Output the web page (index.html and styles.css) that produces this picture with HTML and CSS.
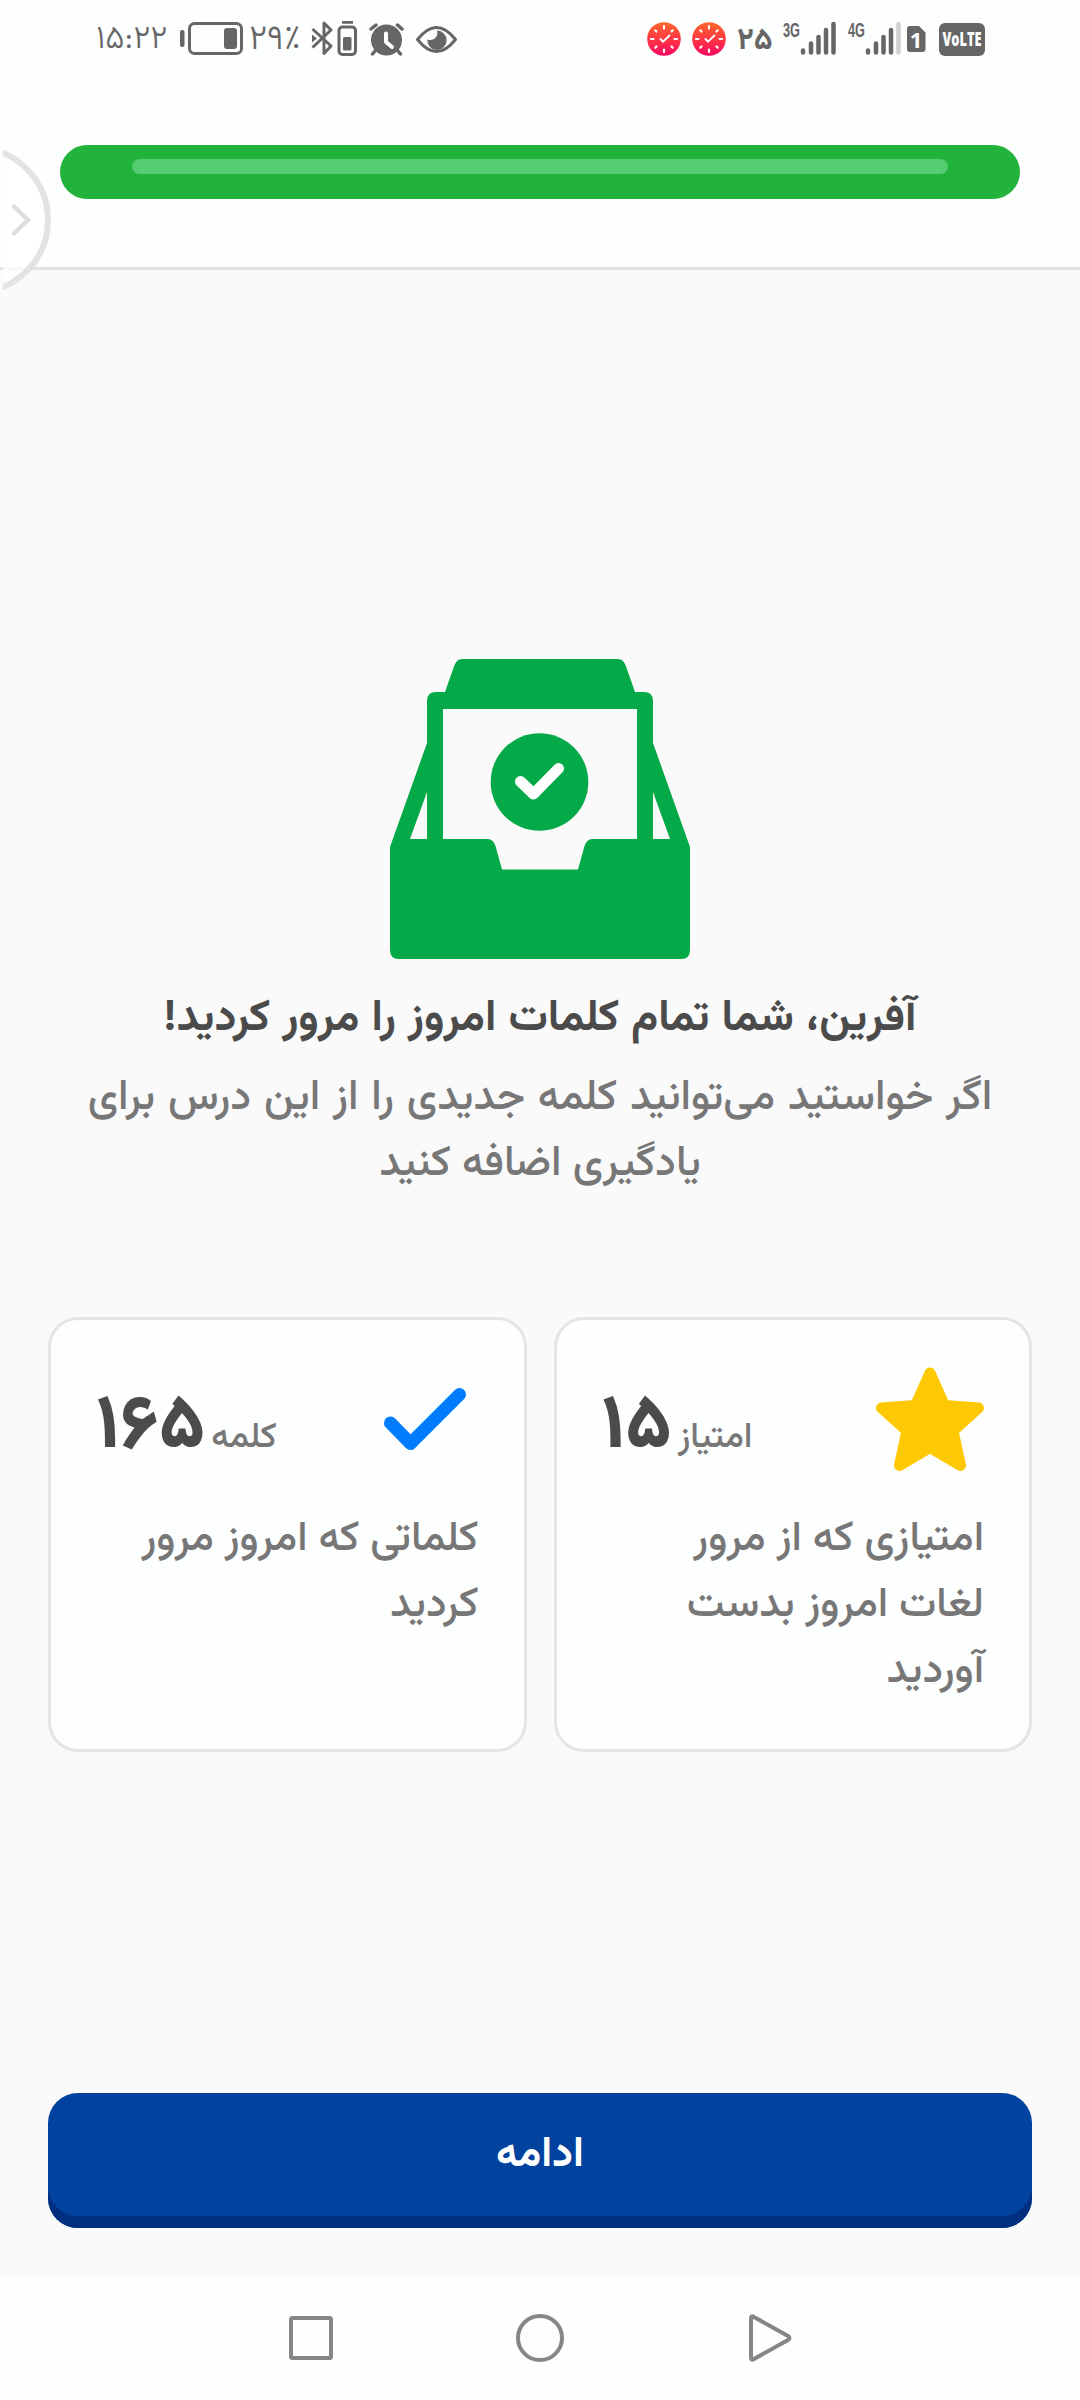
FILE: index.html
```html
<!DOCTYPE html>
<html lang="fa">
<head>
<meta charset="utf-8">
<title>مرور کلمات</title>
<link rel="stylesheet" href="styles.css">
</head>
<body>
<div class="status">
  <div class="status-left">
    <span class="clock">۱۵:۲۲</span>
    <svg class="battery" width="64" height="34" viewBox="179 23 64 34"><rect x="180" y="31" width="4.5" height="17" rx="2"/><rect x="189.500" y="24.500" width="52" height="30" rx="5" fill="none" stroke="#666" stroke-width="3"/><rect x="224" y="29" width="13" height="21" rx="3"/></svg>
    <span class="percent">۲۹٪</span>
    <svg class="bt" width="48" height="38" viewBox="311 21 48 38"><g fill="none" stroke="#666" stroke-width="3" stroke-linejoin="round"><path d="M312.500 30 331 47 324 54.500V24L331 31 312.500 48.500"/><rect x="339" y="28" width="16.500" height="27.500" rx="3.500"/></g><path d="M312 35.500 317 39.500 312 43.500ZM342 22h11v2.700h-11z"/><rect x="343" y="38" width="8.500" height="13.500" rx="1.500"/></svg>
    <svg class="alarm" width="36" height="36" viewBox="369 21 36 36"><circle cx="386.500" cy="40" r="15.500"/><path d="M386 33.500V42L392 47" fill="none" stroke="#fff" stroke-width="4" stroke-linecap="round" stroke-linejoin="round"/><path d="M371 29 376 25M402 29 397.500 25M375 51 372.500 54M398 51 400.500 54" fill="none" stroke="#666" stroke-width="3.500" stroke-linecap="round"/></svg>
    <svg class="eye" width="42" height="30" viewBox="415 24 42 30"><path d="M417.500 39.500Q436.500 15.500 455.500 39.500Q436.500 63.500 417.500 39.500Z" fill="none" stroke="#666" stroke-width="3" stroke-linejoin="round"/><path d="M437 30.500a9.700 9.700 0 1 1-9.700 9q4.700 1.500 8-1.500 3-3.500 1.700-7.500z"/></svg>
  </div>
  <div class="status-right">
    <svg class="dial" width="34" height="34" viewBox="-17 -17 34 34"><defs><linearGradient id="hot" x2="0" y2="1"><stop stop-color="#ff682b"/><stop offset=".5" stop-color="#ff3744"/><stop offset="1" stop-color="#f70762"/></linearGradient></defs><circle r="16.800" fill="url(#hot)"/><path d="M0-13v2.500M0 13v-2.500M-13 0h2.500M13 0h-2.500M-8.700-8.700l1.200 1.200M8.700-8.700l-1.200 1.200M-8.700 8.700l1.200-1.200M8.700 8.700l-1.200-1.200" stroke="#fff" stroke-width="2.200" stroke-linecap="round"/><path d="M-3.500 0-1 2.700 5.500-3.500" fill="none" stroke="#fff" stroke-width="1.900" stroke-linecap="round"/></svg>
    <svg class="dial" width="34" height="34" viewBox="-17 -17 34 34"><circle r="16.800" fill="url(#hot)"/><path d="M0-13v2.500M0 13v-2.500M-13 0h2.500M13 0h-2.500M-8.700-8.700l1.200 1.200M8.700-8.700l-1.200 1.200M-8.700 8.700l1.200-1.200M8.700 8.700l-1.200-1.200" stroke="#fff" stroke-width="2.200" stroke-linecap="round"/><path d="M-3.500 0-1 2.700 5.500-3.500" fill="none" stroke="#fff" stroke-width="1.900" stroke-linecap="round"/></svg>
    <span class="count">۲۵</span>
    <svg class="net-icon" width="54" height="36" viewBox="782 21 54 36"><text x="783" y="37" textLength="17" lengthAdjust="spacingAndGlyphs" class="net">3G</text><path class="bars" d="M803 50.500v2M811 43.500v9M818.500 37v15.500M826 30v22.500M833.500 24v28.500"/></svg>
    <svg class="net-icon sig" width="54" height="36" viewBox="847 21 54 36"><text x="848" y="37" textLength="17" lengthAdjust="spacingAndGlyphs" class="net">4G</text><path class="bars" d="M868 50.500v2M876 43.500v9M883.500 37v15.500M891 30v22.500"/><path class="bars off" d="M898.500 24v28.500"/></svg>
    <svg class="sim" width="20" height="28" viewBox="906 25 20 28"><path d="M910 26h9l6.500 6.500V49q0 3-3 3H910q-3 0-3-3V29q0-3 3-3z"/><text x="916" y="47.500" text-anchor="middle" class="sim-no">1</text></svg>
    <span class="volte"><svg class="net-icon" width="40" height="24" viewBox="0 0 40 24"><text x="0.500" y="19" textLength="39" lengthAdjust="spacingAndGlyphs" class="volte-text">VoLTE</text></svg></span>
  </div>
</div>
<header class="top"><div class="progress"><div class="shine"></div></div></header>
<svg class="handle" width="51" height="150" viewBox="3 144 51 150"><circle cx="-24" cy="220" r="72" fill="#fff" fill-opacity=".75" stroke="#dfe1e1" stroke-opacity=".9" stroke-width="6"/><path d="M14 206.500 28 220 14 233.500" fill="none" stroke="#e0dddf" stroke-width="4.500" stroke-linecap="round"/></svg>
<main class="content" dir="rtl">
  <svg class="box" width="300" height="300" viewBox="0 0 300 300"><path fill="#04aa47" fill-rule="evenodd" d="M72 0H228Q233 0 235.500 6L245 33H254Q263 33 263 42V84L300 188V291Q300 300 291 300H9Q0 300 0 291V188L37 84V42Q37 33 46 33H55L64.500 6Q67 0 72 0ZM53 50V180H98Q103 180 105.500 187L112 210.500H188L194.500 187Q197 180 202 180H247V50ZM37 133 20 180H37ZM263 133V180H280Z"/><circle cx="149.500" cy="123" r="48.800" fill="#04aa47"/><path d="M130.500 122.500 143.500 135 168.500 109.500" fill="none" stroke="#fff" stroke-width="11" stroke-linecap="round" stroke-linejoin="round"/></svg>
  <h1 class="title">آفرین، شما تمام کلمات امروز را مرور کردید!</h1>
  <p class="sub"><span class="sub-a">اگر خواستید می‌توانید کلمه جدیدی را از این درس برای</span><span class="sub-b">یادگیری اضافه کنید</span></p>
  <section class="cards">
    <article class="card">
      <div class="row">
        <svg width="108" height="108" viewBox="876 1366 108 108"><path d="M930 1373 915.500 1405.500 881.500 1408 907 1431 899.500 1465.500 930 1447.500 960.500 1465.500 953 1431 978.500 1408 944.500 1405.500Z" fill="#fec803" stroke="#fec803" stroke-width="11" stroke-linejoin="round"/></svg>
        <div class="figure"><span class="unit">امتیاز</span><b class="number">۱۵</b></div>
      </div>
      <p class="desc"><span>امتیازی که از مرور</span><span>لغات امروز بدست</span><span>آوردید</span></p>
    </article>
    <article class="card">
      <div class="row">
        <svg width="108" height="108" viewBox="371 1366 108 108"><path d="M390.500 1423 410.500 1443.500 459.500 1394.500" fill="none" stroke="#017cfe" stroke-width="13" stroke-linecap="round" stroke-linejoin="round"/></svg>
        <div class="figure"><span class="unit">کلمه</span><b class="number">۱۶۵</b></div>
      </div>
      <p class="desc"><span>کلماتی که امروز مرور</span><span>کردید</span></p>
    </article>
  </section>
  <button class="next"><span class="next-text">ادامه</span></button>
</main>
<nav class="nav">
  <svg width="50" height="50" viewBox="0 0 50 50"><rect x="5" y="5" width="40" height="40" rx="1.500"/></svg>
  <svg width="50" height="50" viewBox="0 0 50 50"><circle cx="25" cy="25" r="22"/></svg>
  <svg width="50" height="50" viewBox="0 0 50 50"><path d="M7 5.200Q7 2 10 4L44 23Q47 25 44 27L10 46Q7 48 7 44.800Z"/></svg>
</nav>
</body>
</html>
```
FILE: styles.css
```css
* { box-sizing: border-box; }
body { margin: 0; width: 1080px; height: 2400px; display: flex; flex-direction: column; background: #fafafa; font-family: "Vazirmatn", "Noto Sans Arabic", "DejaVu Sans", sans-serif; overflow: hidden; position: relative; }
svg { display: block; flex: none; }
h1, p { margin: 0; font-weight: 400; }
.status { height: 80px; background: #fdfefe; display: flex; justify-content: space-between; padding: 0 95px 0 96px; color: #666; fill: #666; }
.status-left, .status-right { display: flex; align-items: center; height: 78px; white-space: nowrap; }
.clock { width: 83px; padding-top: 2px; font-size: 33px; font-weight: 300; }
.percent { width: 60px; padding: 2px 0 0 6px; font-size: 35px; font-weight: 300; }
.bt { margin-left: 8px; }
.alarm { margin-left: 10px; }
.eye { margin-left: 10px; }
.dial { margin-right: 11px; }
.count { width: 45px; padding-top: 4px; font-size: 31px; font-weight: 700; }
.net-icon { overflow: visible; }
.sig { margin-left: 11px; }
.sim { margin: 0 13px 0 5px; }
.net { font: 700 21px "Liberation Sans", sans-serif; }
.bars { stroke: #666; stroke-width: 4.500px; stroke-linecap: round; fill: none; }
.bars.off { stroke: #d0d0d0; }
.sim-no { font: 700 22px "Open Sans", sans-serif; fill: #fff; }
.volte { width: 46px; height: 33px; border-radius: 6px; background: #666; display: grid; place-items: center; }
.volte-text { font: 800 20px "Open Sans", sans-serif; fill: #fff; }
.top { height: 190px; padding: 65px 60px 0; background: #fdfefe; border-bottom: 3px solid #e2e3e3; }
.progress { height: 54px; border-radius: 27px; background: #22b33d; padding: 14px 72px; }
.shine { height: 15px; border-radius: 8px; background: #54cc6f; }
.handle { position: absolute; left: 3px; top: 144px; }
.content { height: 2006px; display: flex; flex-direction: column; align-items: center; padding: 389px 48px 0; }
.title { margin-top: 21px; height: 80px; line-height: 80px; font-size: 44px; font-weight: 700; word-spacing: 1px; color: #4b4b4b; white-space: nowrap; }
.sub { margin-top: 6px; display: flex; flex-direction: column; align-items: center; font-size: 42.500px; font-weight: 500; line-height: 66px; word-spacing: 1.800px; color: #777; white-space: nowrap; }
.sub-b { word-spacing: 0; }
.cards { width: 984px; margin-top: 119px; display: grid; grid-template-columns: 1fr 1fr; gap: 27px; height: 435px; }
.card { border: 3px solid #e5e5e5; border-radius: 30px; background: #fdfefe; padding: 46px 45px 0; }
.row { display: flex; justify-content: space-between; height: 108px; }
.figure { display: flex; align-items: baseline; gap: 6px; line-height: 126px; }
.unit { font-size: 35px; font-weight: 500; color: #777; }
.number { font-size: 76px; font-weight: 800; color: #4b4b4b; }
.desc { margin-top: 33px; display: flex; flex-direction: column; align-items: flex-start; font-size: 42px; font-weight: 500; line-height: 66px; color: #777; white-space: nowrap; }
.next { margin-top: 341px; width: 984px; height: 135px; border: 0; border-radius: 30px; background: #01429e; box-shadow: inset 0 -12px #012f80; color: #fff; font: 700 42px "Vazirmatn", "Noto Sans Arabic", "DejaVu Sans", sans-serif; padding: 2px 0 12px; }
.nav { height: 124px; background: #fdfefe; display: flex; justify-content: center; gap: 179px; padding-top: 37px; fill: none; stroke: #868686; stroke-width: 4px; }
```
